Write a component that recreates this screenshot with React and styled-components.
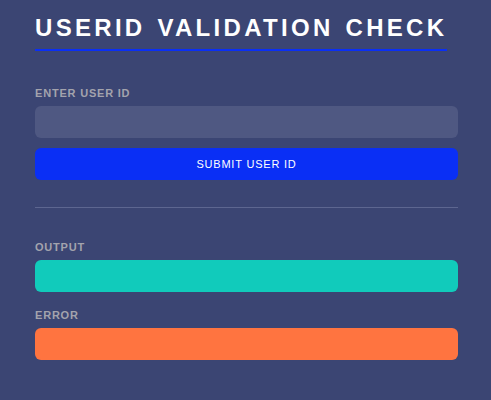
import styled, { createGlobalStyle } from 'styled-components'

const GlobalStyle = createGlobalStyle`
  html, body {
    margin: 0;
    padding: 0;
    background: #3b4573;
  }
  body {
    font-family: "Liberation Sans", Arial, sans-serif;
  }
`

const Page = styled.div`
  min-height: 400px;
  background: #3b4573;
  padding: 14px 33px 0 35px;
  box-sizing: border-box;
`

const Title = styled.h1`
  display: inline-block;
  margin: 0;
  padding-bottom: 7px;
  font-size: 24px;
  line-height: 28px;
  font-weight: 700;
  letter-spacing: 3.3px;
  word-spacing: 2px;
  white-space: nowrap;
  color: #ffffff;
  border-bottom: 2px solid #0a2ff5;
`

const Form = styled.div`
  display: flex;
  flex-direction: column;
  margin-top: ${p => p.top || 0}px;
`

const Label = styled.label`
  font-size: 11px;
  line-height: 13px;
  font-weight: 700;
  letter-spacing: 0.8px;
  color: #a3a3ad;
  margin-bottom: 6px;
`

const Input = styled.input`
  height: 32px;
  border: none;
  border-radius: 6px;
  background: #4f5882;
  outline: none;
  padding: 0 10px;
  box-sizing: border-box;
`

const Button = styled.button`
  margin-top: 10px;
  height: 32px;
  border: none;
  border-radius: 6px;
  background: #0a2ff5;
  color: #ffffff;
  font-family: "Liberation Sans", Arial, sans-serif;
  font-size: 11px;
  letter-spacing: 0.8px;
`

const Divider = styled.hr`
  border: none;
  border-top: 1px solid #5d6690;
  margin: 27px 0 33px;
`

const ResultBox = styled.div`
  height: 32px;
  border-radius: 6px;
  background: ${p => p.color};
  margin-bottom: ${p => p.gap || 0}px;
`

const App = () => {
  return (
    <Page>
      <GlobalStyle />
      <Title>USERID VALIDATION CHECK</Title>
      <Form top={36}>
        <Label>ENTER USER ID</Label>
        <Input />
        <Button>SUBMIT USER ID</Button>
      </Form>
      <Divider />
      <Form>
        <Label>OUTPUT</Label>
        <ResultBox color='#11cbbb' gap={17} />
        <Label>ERROR</Label>
        <ResultBox color='#ff7440' />
      </Form>
    </Page>
  )
}

export default App
